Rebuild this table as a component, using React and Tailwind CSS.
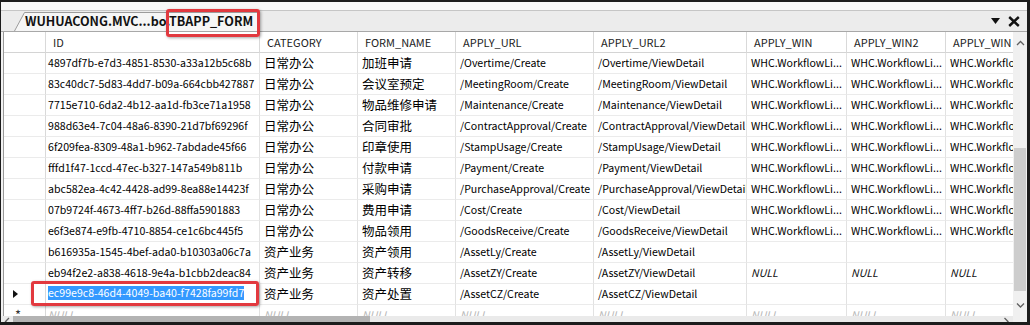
import React from "react";

const WHC = "WHC.WorkflowLi...";
const rows = [
  ["4897df7b-e7d3-4851-8530-a33a12b5c68b", "日常办公", "加班申请", "/Overtime/Create", "/Overtime/ViewDetail", WHC, WHC, WHC],
  ["83c40dc7-5d83-4dd7-b09a-664cbb427887", "日常办公", "会议室预定", "/MeetingRoom/Create", "/MeetingRoom/ViewDetail", WHC, WHC, WHC],
  ["7715e710-6da2-4b12-aa1d-fb3ce71a1958", "日常办公", "物品维修申请", "/Maintenance/Create", "/Maintenance/ViewDetail", WHC, WHC, WHC],
  ["988d63e4-7c04-48a6-8390-21d7bf69296f", "日常办公", "合同审批", "/ContractApproval/Create", "/ContractApproval/ViewDetail", WHC, WHC, WHC],
  ["6f209fea-8309-48a1-b962-7abdade45f66", "日常办公", "印章使用", "/StampUsage/Create", "/StampUsage/ViewDetail", WHC, WHC, WHC],
  ["fffd1f47-1ccd-47ec-b327-147a549b811b", "日常办公", "付款申请", "/Payment/Create", "/Payment/ViewDetail", WHC, WHC, WHC],
  ["abc582ea-4c42-4428-ad99-8ea88e14423f", "日常办公", "采购申请", "/PurchaseApproval/Create", "/PurchaseApproval/ViewDetail", WHC, WHC, WHC],
  ["07b9724f-4673-4ff7-b26d-88ffa5901883", "日常办公", "费用申请", "/Cost/Create", "/Cost/ViewDetail", WHC, WHC, WHC],
  ["e6f3e874-e9fb-4710-8854-ce1c6bc445f5", "日常办公", "物品领用", "/GoodsReceive/Create", "/GoodsReceive/ViewDetail", WHC, WHC, WHC],
  ["b616935a-1545-4bef-ada0-b10303a06c7a", "资产业务", "资产领用", "/AssetLy/Create", "/AssetLy/ViewDetail", "", "", ""],
  ["eb94f2e2-a838-4618-9e4a-b1cbb2deac84", "资产业务", "资产转移", "/AssetZY/Create", "/AssetZY/ViewDetail", null, null, null],
  ["ec99e9c8-46d4-4049-ba40-f7428fa99fd7", "资产业务", "资产处置", "/AssetCZ/Create", "/AssetCZ/ViewDetail", "", "", ""],
];

const headers = ["ID", "CATEGORY", "FORM_NAME", "APPLY_URL", "APPLY_URL2", "APPLY_WIN", "APPLY_WIN2", "APPLY_WIN"];

function Chevron({ dir }) {
  const d = {
    up: "M1 5 L4.5 1.5 L8 5",
    down: "M1 1.5 L4.5 5 L8 1.5",
    left: "M5 1 L1.5 4.5 L5 8",
    right: "M1.5 1 L5 4.5 L1.5 8",
  }[dir];
  const vert = dir === "up" || dir === "down";
  return (
    <svg width={vert ? 9 : 6.5} height={vert ? 6.5 : 9} viewBox={vert ? "0 0 9 6.5" : "0 0 6.5 9"}>
      <path d={d} fill="none" stroke="#606060" strokeWidth="1.3" />
    </svg>
  );
}

function Cell({ children, idx }) {
  const pad = idx === 0 ? "pl-[2px]" : "pl-[4px]";
  return (
    <div className={`h-[21px] border-b border-r border-b-[#ebebeb] border-r-[#e2e2e2] flex items-center overflow-hidden whitespace-nowrap ${pad}`}>
      {children}
    </div>
  );
}

export default function App() {
  return (
    <div
      className="relative w-[1030px] h-[325px] overflow-hidden bg-white border-t-2 border-r-[3px] border-b-[3px] border-l border-[#1c1c1c] flex flex-col"
      style={{ fontFamily: "'Noto Sans CJK SC', 'Liberation Sans', sans-serif" }}
    >
      {/* tab strip */}
      <div className="h-[8px] shrink-0 bg-[#f7f7f7]" />
      <div className="h-[22px] shrink-0 bg-[#ececec] border-t border-b border-t-[#c6c6c6] border-b-[#a8a8a8] flex items-start">
        <div className="relative ml-[13px] mt-[1px] h-[19px] w-[246px]">
          <svg width="246" height="19" viewBox="0 0 246 19" className="absolute inset-0">
            <path d="M0.5 19 L10.5 0.5 L244.5 0.5 L244.5 19" fill="#f6f6f6" stroke="#9c9c9c" strokeWidth="1" />
          </svg>
          <div className="relative pl-[11px] h-[19px] flex items-center text-[12.5px] font-bold text-[#111] leading-none whitespace-nowrap">
            WUHUACONG.MVC...bo.TBAPP_FORM
          </div>
        </div>
        <div className="ml-auto flex items-center h-[20px] pr-[7px] gap-[8px]">
          <svg width="9" height="6" viewBox="0 0 9 6">
            <path d="M0 0 L9 0 L4.5 6 Z" fill="#111" />
          </svg>
          <svg width="12" height="11" viewBox="0 0 12 11">
            <path d="M1.2 1 L10.8 10 M10.8 1 L1.2 10" stroke="#111" strokeWidth="2.4" />
          </svg>
        </div>
      </div>

      {/* body */}
      <div className="h-[284px] shrink-0 flex">
        <div className="flex-1 overflow-hidden pl-[2px] bg-[#f2f2f2]">
          <div className="h-full border-l border-[#9a9a9a] bg-white overflow-hidden">
            <div className="w-[1042px] grid grid-cols-[42px_214px_98px_98px_138px_153px_100px_99px_99px] text-[10.6px] text-black">
              {/* header */}
              <div className="h-[21px] border-b border-r border-b-[#d4d4d4] border-r-[#d9d9d9]" />
              {headers.map((h, i) => (
                <div
                  key={i}
                  className="h-[21px] border-b border-r border-b-[#d4d4d4] border-r-[#d9d9d9] flex items-center pl-[7px] text-[11px] text-[#222] whitespace-nowrap overflow-hidden"
                >
                  {h}
                </div>
              ))}

              {rows.map((r, ri) => {
                const sel = ri === rows.length - 1;
                return (
                  <React.Fragment key={ri}>
                    <div className="h-[21px] border-b border-r border-b-[#ebebeb] border-r-[#d9d9d9] flex items-center pl-[9px]">
                      {sel && (
                        <svg width="5" height="8" viewBox="0 0 5 8">
                          <path d="M0 0 L5 4 L0 8 Z" fill="#111" />
                        </svg>
                      )}
                    </div>
                    {r.map((v, ci) => (
                      <Cell key={ci} idx={ci}>
                        {v === null ? (
                          <span className="italic text-[#111]">NULL</span>
                        ) : sel && ci === 0 ? (
                          <span className="bg-[#3399ff] text-white leading-[14px] -mt-[3px]">{v}</span>
                        ) : (
                          <span className={ci === 1 || ci === 2 ? "text-[12.5px]" : ""}>{v}</span>
                        )}
                      </Cell>
                    ))}
                  </React.Fragment>
                );
              })}

              {/* new row */}
              <div className="h-[21px] border-b border-r border-b-[#ebebeb] border-r-[#d9d9d9] flex items-start pl-[11px] pt-[3px] text-[13px] text-[#333] leading-none">
                *
              </div>
              {headers.map((_, ci) => (
                <Cell key={ci} idx={ci}>
                  <span className="italic text-[#b8b8b8]">NULL</span>
                </Cell>
              ))}
            </div>
          </div>
        </div>

        {/* vertical scrollbar */}
        <div className="w-[14px] shrink-0 bg-[#f0f0f0] flex flex-col">
          <div className="h-[22px] flex items-center justify-center">
            <Chevron dir="up" />
          </div>
          <div className="flex-1">
            <div className="mt-[94px] h-[143px] mx-[1px] bg-[#cdcdcd]" />
          </div>
          <div className="h-[22px] flex items-center justify-center">
            <Chevron dir="down" />
          </div>
        </div>
      </div>

      {/* horizontal scrollbar */}
      <div className="h-[17px] shrink-0 bg-[#eaeaea] flex">
        <div className="w-[12px] shrink-0 flex items-start justify-center pt-[1px]">
          <Chevron dir="left" />
        </div>
        <div className="w-[357px] shrink-0 h-[17px] bg-[#b3b3b3]" />
        <div className="flex-1" />
        <div className="w-[14px] shrink-0 flex items-start justify-center pt-[1px]">
          <Chevron dir="right" />
        </div>
        <div className="w-[14px] shrink-0 bg-[#f0f0f0]" />
      </div>

      {/* annotation boxes */}
      <div className="absolute left-[165px] top-[7px] w-[94px] h-[28px] border-[3px] border-[#e2393f] rounded-[3px] shadow-[1px_1px_3px_rgba(0,0,0,0.35)]" />
      <div className="absolute left-[30px] top-[279px] w-[228px] h-[25px] border-[3px] border-[#e2393f] rounded-[3px] shadow-[1px_1px_3px_rgba(0,0,0,0.35)]" />
    </div>
  );
}
